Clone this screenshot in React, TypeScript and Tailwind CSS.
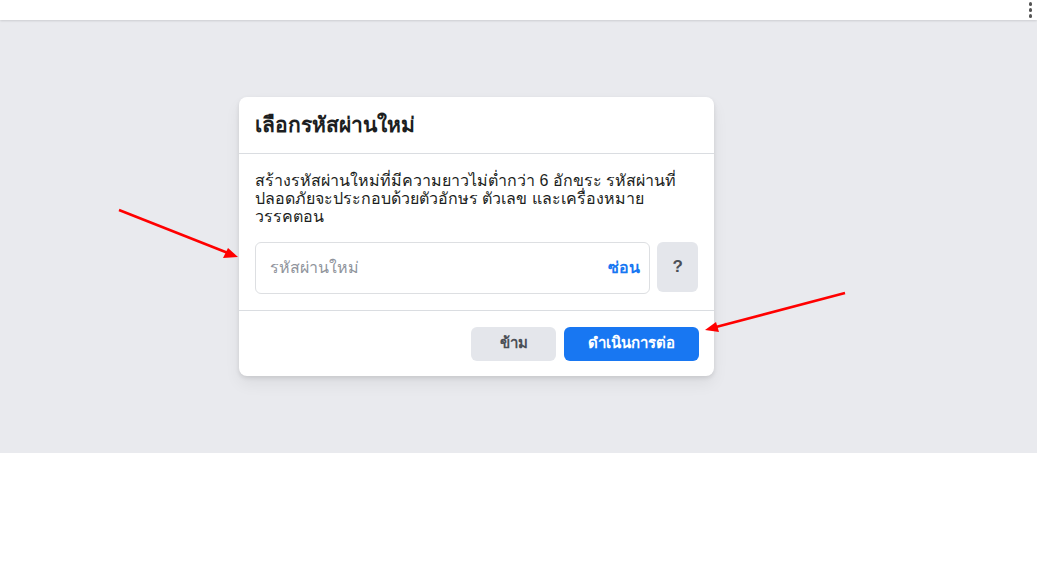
export default function App() {
  return (
    <div className="relative w-[1037px] h-[570px] bg-white overflow-hidden" style={{ fontFamily: '"Liberation Sans", "Noto Sans", Tahoma, sans-serif' }}>
      <div className="h-[20px] bg-white shadow-[0_1px_2px_rgba(0,0,0,0.12)] relative z-10 flex justify-end pr-[5px] pt-[1px]">
        <div className="flex flex-col gap-[2.5px] pt-[1px]">
          <span className="block w-[3.5px] h-[3.5px] bg-[#555] rounded-full" />
          <span className="block w-[3.5px] h-[3.5px] bg-[#555] rounded-full" />
          <span className="block w-[3.5px] h-[3.5px] bg-[#555] rounded-full" />
        </div>
      </div>
      <div className="h-[433px] bg-[#e9eaee] pt-[77px] pl-[239px]">
        <div className="w-[475px] bg-white rounded-[8px] shadow-[0_2px_4px_rgba(0,0,0,0.1),0_8px_16px_rgba(0,0,0,0.06)]">
          <div className="h-[57px] px-4 flex items-center border-b border-[#dadde1]">
            <h2 className="text-[21px] font-bold text-[#1c1e21] leading-6">เลือกรหัสผ่านใหม่</h2>
          </div>
          <div className="px-4 pt-[18px] pb-4 border-b border-[#dadde1]">
            <p className="text-[16px] leading-[18px] text-[#1c1e21] pr-2">
              สร้างรหัสผ่านใหม่ที่มีความยาวไม่ต่ำกว่า 6 อักขระ รหัสผ่านที่ปลอดภัยจะประกอบด้วยตัวอักษร ตัวเลข และเครื่องหมาย<br />วรรคตอน
            </p>
            <div className="flex gap-[7px] mt-[16px]">
              <div className="w-[397px] h-[52px] border border-[#dddfe2] rounded-[6px] flex items-center justify-between pl-[14px] pr-[9px]">
                <span className="text-[16px] text-[#90949c]">รหัสผ่านใหม่</span>
                <span className="text-[16px] font-bold text-[#1877f2]">ซ่อน</span>
              </div>
              <div className="w-[41px] h-[50px] bg-[#e4e6eb] rounded-[6px] flex items-center justify-center text-[17px] font-bold text-[#4b4f56]">?</div>
            </div>
          </div>
          <div className="h-[65px] px-[15px] flex items-center justify-end gap-[8px]">
            <button className="w-[85px] h-[34px] bg-[#e4e6eb] rounded-[6px] text-[15px] font-bold text-[#4b4f56]">ข้าม</button>
            <button className="w-[135px] h-[34px] bg-[#1877f2] rounded-[6px] text-[15px] font-bold text-white">ดำเนินการต่อ</button>
          </div>
        </div>
      </div>
      <svg className="absolute left-0 top-0 pointer-events-none" width="1037" height="570">
        <line x1="119" y1="210" x2="228" y2="253" stroke="#ff0000" strokeWidth="2.5" />
        <polygon points="238,257 223,258 228,248" fill="#ff0000" />
        <line x1="845" y1="293" x2="716" y2="327" stroke="#ff0000" strokeWidth="2.5" />
        <polygon points="705,330 716,322 719,332" fill="#ff0000" />
      </svg>
    </div>
  )
}
